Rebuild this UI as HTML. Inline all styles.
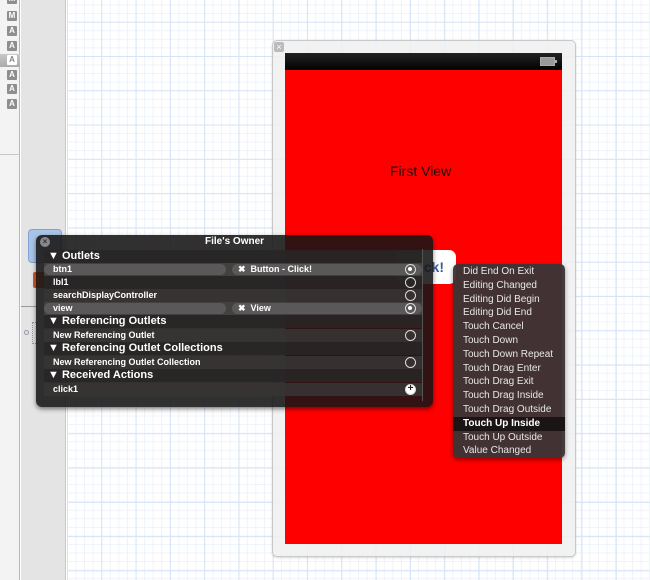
<!DOCTYPE html>
<html><head><meta charset="utf-8"><style>
*{margin:0;padding:0;box-sizing:border-box}
body{width:650px;height:580px;overflow:hidden;position:relative;font-family:"Liberation Sans",sans-serif;background:#fff}
.abs{position:absolute}
#lcol{left:0;top:0;width:20px;height:580px;background:#f3f3f3;border-right:1px solid #b8b8b8}
#gcol{left:21px;top:0;width:45px;height:580px;background:#e4e4e4;border-right:1px solid #c8c8c8}
#canvas{left:67px;top:0;width:583px;height:580px;background-color:#fff;
background-image:
linear-gradient(to right,#d6e4f7 1px,transparent 1px),
linear-gradient(to bottom,#d6e4f7 1px,transparent 1px),
linear-gradient(to right,#edf3fb 1px,transparent 1px),
linear-gradient(to bottom,#edf3fb 1px,transparent 1px);
background-size:34.3px 34.3px,34.3px 34.3px,8.575px 8.575px,8.575px 8.575px;
background-position:0 21.7px,0 21.7px,0 21.7px,0 21.7px}
.ic{position:absolute;left:7px;width:10px;height:10px;background:#8e8e8e;color:#fff;font-size:8px;font-weight:bold;line-height:10px;text-align:center;border-radius:1px}
#frame{left:272px;top:40px;width:304px;height:517px;background:rgba(240,240,240,.85);border:1px solid #c8c8c8;border-radius:5px;box-shadow:0 1px 2px rgba(0,0,0,.15)}
#panel{left:36px;top:235px;width:397px;height:172px;background:rgba(22,20,20,.88);border-radius:6px;box-shadow:0 2px 5px rgba(0,0,0,.5);color:#fff;font-size:9px;font-weight:bold}
.row{position:absolute;left:8px;width:378px;height:13px;line-height:13px}
.hdr{font-size:11px;padding-left:4px;background:rgba(40,38,38,.9)}
.it{padding-left:9px;background:rgba(55,52,52,.9)}
.it.d{background:rgba(40,38,38,.9)}
.pill{position:absolute;left:0;top:1px;height:11px;border-radius:6px;background:#5a5858}
.circ{position:absolute;right:6px;top:1px;width:11px;height:11px;border:1.5px solid #ddd;border-radius:50%}
.circ.f::after{content:"";position:absolute;left:2px;top:2px;width:4px;height:4px;border-radius:50%;background:#fff}
#menu{left:453px;top:264px;width:112px;height:194px;background:rgba(58,52,53,.96);border-radius:5px;box-shadow:0 2px 5px rgba(0,0,0,.4);padding-top:1px}
#menu div{height:13.8px;line-height:13.8px;padding-left:10px;color:#e8e8e8;font-size:10px}
#menu div.sel{background:#1a1414;color:#fff;font-weight:bold}
</style></head><body>
<div id="lcol" class="abs"></div>
<div class="abs" style="left:0;top:54px;width:20px;height:13px;background:linear-gradient(#c8c8c8,#aaa)"></div>
<div class="ic" style="top:-6px">M</div>
<div class="ic" style="top:11px">M</div>
<div class="ic" style="top:26px">A</div>
<div class="ic" style="top:41px">A</div>
<div class="ic" style="top:55px;background:#fff;color:#888">A</div>
<div class="ic" style="top:70px">A</div>
<div class="ic" style="top:84px">A</div>
<div class="ic" style="top:99px">A</div>
<div class="abs" style="left:0;top:154px;width:20px;height:1px;background:#c8c8c8"></div>
<div id="gcol" class="abs"></div>
<div class="abs" style="left:28px;top:229px;width:34px;height:34px;background:#a9c4e6;border:1px solid #7fa3d6;border-radius:4px"></div>
<div class="abs" style="left:33px;top:272px;width:18px;height:16px;background:#d35a2a;border-radius:2px"></div>
<div class="abs" style="left:21px;top:306px;width:16px;height:1px;background:#999"></div>
<div class="abs" style="left:24px;top:330px;width:5px;height:5px;border-radius:50%;border:1px solid #99a"></div>
<div class="abs" style="left:32px;top:322px;width:6px;height:22px;border:1px dotted #999"></div>
<div id="canvas" class="abs"></div>
<div id="frame" class="abs"></div>
<div class="abs" style="left:274px;top:42px;width:10px;height:10px;background:#bbb;border-radius:2px;color:#fff;font-size:9px;line-height:10px;text-align:center">×</div>
<div class="abs" style="left:285px;top:53px;width:277px;height:18px;background:linear-gradient(#222,#000)"></div>
<div class="abs" style="left:540px;top:57px;width:15px;height:9px;border:1px solid #aaa;background:#999"></div>
<div class="abs" style="left:555px;top:60px;width:2px;height:3px;background:#aaa"></div>
<div class="abs" style="left:285px;top:70px;width:277px;height:474px;background:#ff0000"></div>
<div class="abs" style="left:390px;top:163px;font-size:14px;color:#111">First View</div>
<div class="abs" style="left:396px;top:250px;width:60px;height:34px;background:#fff;border-radius:7px;color:#3a5a9a;font-weight:bold;font-size:14px;line-height:34px;text-align:right;padding-right:12px">ck!</div>
<div id="panel" class="abs">
<div class="abs" style="left:4px;top:2px;width:10px;height:10px;border-radius:50%;background:#888;color:#333;font-size:8px;line-height:10px;text-align:center">×</div>
<div class="abs" style="left:0;width:397px;top:1px;text-align:center;font-size:10px;line-height:12px">File's Owner</div>
<div class="abs" style="left:386px;top:14px;width:1px;height:152px;background:#555"></div>
<div class="row hdr" style="top:15px">▼ Outlets</div>
<div class="row it" style="top:28px;background:rgba(70,67,67,.9)"><div class="pill" style="width:182px"></div><div class="pill" style="left:188px;width:190px"></div><span style="position:relative">btn1</span><span style="position:absolute;left:194px">✖&nbsp; Button - Click!</span><div class="circ f"></div></div>
<div class="row it d" style="top:41px">lbl1<div class="circ"></div></div>
<div class="row it" style="top:54px">searchDisplayController<div class="circ"></div></div>
<div class="row it" style="top:67px;background:rgba(70,67,67,.9)"><div class="pill" style="width:182px"></div><div class="pill" style="left:188px;width:190px"></div><span style="position:relative">view</span><span style="position:absolute;left:194px">✖&nbsp; View</span><div class="circ f"></div></div>
<div class="row hdr" style="top:80px">▼ Referencing Outlets</div>
<div class="row it" style="top:94px">New Referencing Outlet<div class="circ"></div></div>
<div class="row hdr" style="top:107px">▼ Referencing Outlet Collections</div>
<div class="row it" style="top:121px">New Referencing Outlet Collection<div class="circ"></div></div>
<div class="row hdr" style="top:134px">▼ Received Actions</div>
<div class="row it" style="top:148px">click1<div class="circ" style="background:#fff;color:#222;font-size:10px;line-height:8px;text-align:center">+</div></div>
</div>
<div id="menu" class="abs">
<div>Did End On Exit</div><div>Editing Changed</div><div>Editing Did Begin</div><div>Editing Did End</div><div>Touch Cancel</div><div>Touch Down</div><div>Touch Down Repeat</div><div>Touch Drag Enter</div><div>Touch Drag Exit</div><div>Touch Drag Inside</div><div>Touch Drag Outside</div><div class="sel">Touch Up Inside</div><div>Touch Up Outside</div><div>Value Changed</div>
</div>
</body></html>
